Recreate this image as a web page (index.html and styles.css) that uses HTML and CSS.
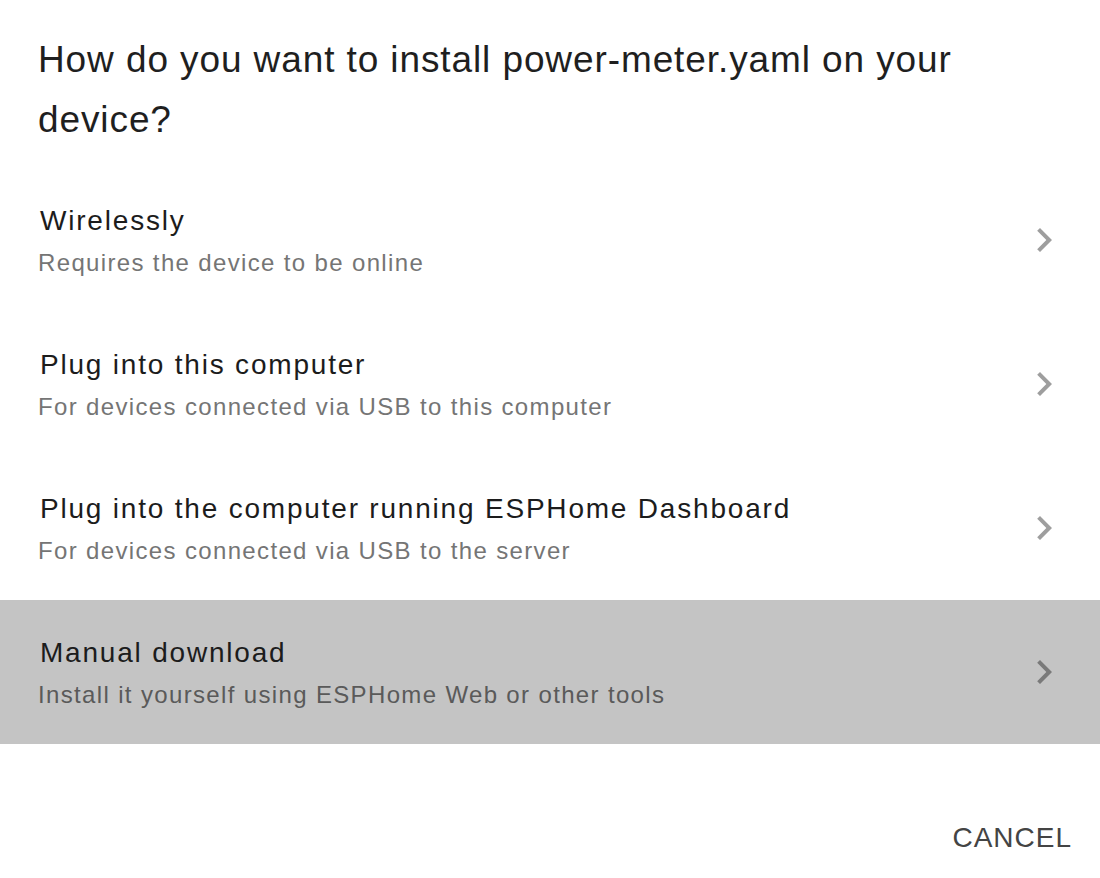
FILE: index.html
```html
<!DOCTYPE html>
<html lang="en">
<head>
<meta charset="utf-8">
<title>Install power-meter.yaml</title>
<link rel="stylesheet" href="styles.css">
</head>
<body>
<div class="dialog">
  <h2 class="title">How do you want to install power-meter.yaml on your device?</h2>
  <ul class="list">
    <li class="item">
      <div class="text">
        <span class="primary">Wirelessly</span>
        <span class="secondary">Requires the device to be online</span>
      </div>
      <svg class="chev" viewBox="0 0 24 24"><path d="M8.59 16.59L13.17 12 8.59 7.41 10 6l6 6-6 6-1.41-1.41z"/></svg>
    </li>
    <li class="item">
      <div class="text">
        <span class="primary">Plug into this computer</span>
        <span class="secondary">For devices connected via USB to this computer</span>
      </div>
      <svg class="chev" viewBox="0 0 24 24"><path d="M8.59 16.59L13.17 12 8.59 7.41 10 6l6 6-6 6-1.41-1.41z"/></svg>
    </li>
    <li class="item">
      <div class="text">
        <span class="primary">Plug into the computer running ESPHome Dashboard</span>
        <span class="secondary">For devices connected via USB to the server</span>
      </div>
      <svg class="chev" viewBox="0 0 24 24"><path d="M8.59 16.59L13.17 12 8.59 7.41 10 6l6 6-6 6-1.41-1.41z"/></svg>
    </li>
    <li class="item active">
      <div class="text">
        <span class="primary">Manual download</span>
        <span class="secondary">Install it yourself using ESPHome Web or other tools</span>
      </div>
      <svg class="chev" viewBox="0 0 24 24"><path d="M8.59 16.59L13.17 12 8.59 7.41 10 6l6 6-6 6-1.41-1.41z"/></svg>
    </li>
  </ul>
  <div class="actions">
    <button class="btn">Cancel</button>
  </div>
</div>
</body>
</html>
```

FILE: styles.css
```css
html, body {
  margin: 0;
  padding: 0;
  background: #ffffff;
}
body {
  font-family: "Liberation Sans", Arial, sans-serif;
  width: 1100px;
  height: 878px;
  overflow: hidden;
}
.dialog {
  display: flex;
  flex-direction: column;
  height: 878px;
}
.title {
  margin: 0;
  padding: 30px 38px 0 38px;
  font-size: 37px;
  font-weight: 400;
  line-height: 60px;
  letter-spacing: 0.9px;
  color: #1f1f1f;
}
.list {
  list-style: none;
  margin: 18px 0 0 0;
  padding: 0;
}
.item {
  height: 144px;
  display: flex;
  align-items: center;
  padding: 0 32px 0 38px;
}
.item.active {
  background: #c4c4c4;
}
.text {
  flex: 1;
  display: flex;
  flex-direction: column;
  gap: 6px;
}
.primary {
  font-size: 28px;
  line-height: 40px;
  letter-spacing: 1.8px;
  color: #1c1c1c;
  padding-left: 2px;
}
.secondary {
  font-size: 24px;
  line-height: 32px;
  letter-spacing: 1.35px;
  color: #757575;
}
.chev {
  width: 48px;
  height: 48px;
  fill: #9e9e9e;
  flex: none;
}
.active .secondary { color: #5a5a5a; }
.active .chev { fill: #7a7a7a; }
.actions {
  margin-top: auto;
  display: flex;
  justify-content: flex-end;
  padding: 0 16px 4px 0;
}
.btn {
  background: none;
  border: none;
  font-family: "Liberation Sans", Arial, sans-serif;
  font-size: 28px;
  letter-spacing: 1px;
  text-transform: uppercase;
  color: #444444;
  height: 72px;
  padding: 0 12px;
}
```
